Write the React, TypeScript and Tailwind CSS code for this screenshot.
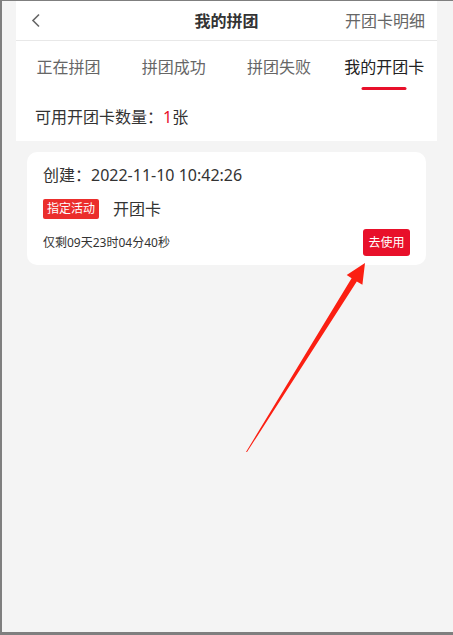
import React from "react";

const tabs = ["正在拼团", "拼团成功", "拼团失败", "我的开团卡"];

export default function App() {
  return (
    <div
      className="relative w-[453px] h-[635px] overflow-hidden bg-[#f4f4f4] border-l-2 border-t border-b-[3px] border-[#7f7f7f]"
      style={{ fontFamily: '"Noto Sans", "Noto Sans CJK SC", sans-serif' }}
    >
      {/* left edge artifacts */}
      <div className="absolute left-[-2px] top-[102px] w-[2px] h-[20px] bg-[#3a5a9a]" />
      <div className="absolute left-[-2px] top-[559px] w-[2px] h-[8px] bg-[#8a1a1a]" />

      <div className="ml-[14px] w-[421px] bg-white">
        {/* nav bar */}
        <div className="relative h-[40px] flex items-center justify-center border-b border-[#e8e8e8]">
          <svg
            className="absolute left-[15px] top-[12px]"
            width="10"
            height="15"
            viewBox="0 0 10 15"
            fill="none"
          >
            <path d="M8 1.5 L2 7.5 L8 13.5" stroke="#666" strokeWidth="1.6" />
          </svg>
          <span className="text-[16px] font-bold text-[#333] leading-none">我的拼团</span>
          <span className="absolute right-[12px] top-[10px] text-[16px] text-[#666] leading-[20px]">
            开团卡明细
          </span>
        </div>
        {/* tabs */}
        <div className="flex h-[53px]">
          {tabs.map((t, i) => (
            <div key={t} className="flex-1 relative flex justify-center">
              <span
                className={`mt-[15px] text-[16px] leading-[22px] ${
                  i === 3 ? "text-[#222]" : "text-[#666]"
                }`}
              >
                {t}
              </span>
              {i === 3 && (
                <div className="absolute top-[46px] left-1/2 -translate-x-1/2 w-[45px] h-[3px] rounded-full bg-[#e8102a]" />
              )}
            </div>
          ))}
        </div>
        {/* count */}
        <div className="h-[47px] pl-[19px] pt-[12px] text-[16px] leading-[22px] text-[#333]">
          可用开团卡数量：<span className="text-[#e8102a]">1</span>张
        </div>
      </div>

      {/* card */}
      <div className="mt-[11px] ml-[25px] w-[399px] bg-white rounded-[10px] pl-[16px] pr-[16px] pt-[12px] pb-[9px]">
        <div className="h-[22px] text-[16px] leading-[22px] text-[#333]">创建：2022-11-10 10:42:26</div>
        <div className="mt-[13px] h-[20px] flex items-center">
          <span className="h-[20px] px-[4px] rounded-[2px] bg-[#eb2e2c] text-white text-[12px] leading-[20px]">
            指定活动
          </span>
          <span className="ml-[14px] text-[16px] leading-[20px] text-[#333]">开团卡</span>
        </div>
        <div className="mt-[10px] h-[27px] flex items-center justify-between">
          <span className="text-[12px] text-[#333] leading-[16px]">仅剩09天23时04分40秒</span>
          <span className="w-[47px] h-[27px] rounded-[3px] bg-[#e8102a] text-white text-[12px] leading-[27px] text-center">
            去使用
          </span>
        </div>
      </div>

      {/* annotation arrow */}
      <svg
        className="absolute left-[-2px] top-[-1px] pointer-events-none"
        width="453"
        height="635"
        viewBox="0 0 453 635"
      >
        <polygon
          points="246,452 351.6,278.3 346.7,275.1 365,263 362.4,284.7 356.8,281.5 247,452"
          fill="#fb1f12"
        />
      </svg>
    </div>
  );
}
